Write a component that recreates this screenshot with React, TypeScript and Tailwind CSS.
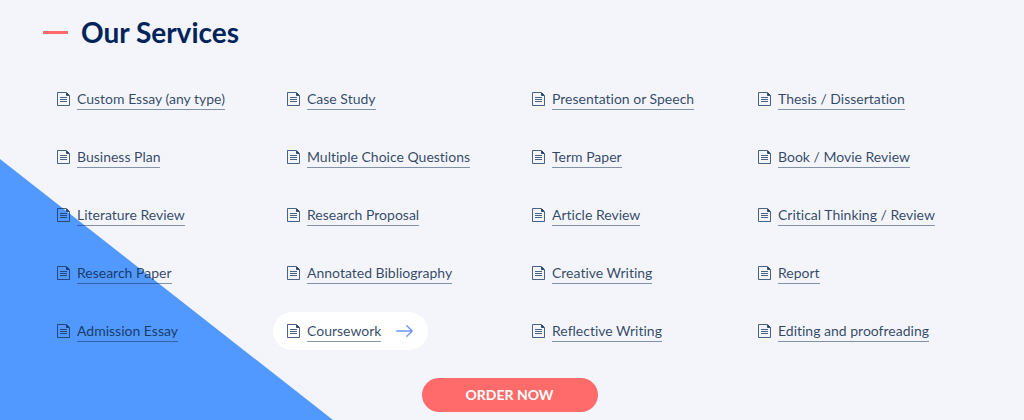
const columns = [
  ["Custom Essay (any type)", "Business Plan", "Literature Review", "Research Paper", "Admission Essay"],
  ["Case Study", "Multiple Choice Questions", "Research Proposal", "Annotated Bibliography", "Coursework"],
  ["Presentation or Speech", "Term Paper", "Article Review", "Creative Writing", "Reflective Writing"],
  ["Thesis / Dissertation", "Book / Movie Review", "Critical Thinking / Review", "Report", "Editing and proofreading"],
];

const DocumentIcon = () => (
  <svg className="h-3.5 w-[13px] shrink-0" viewBox="0 0 13 14" fill="none" stroke="currentColor" aria-hidden="true">
    <path d="M9.5 .5H.5v13h12V3.5z" strokeOpacity=".75" />
    <path d="M9.5 1v2.5H12z" fill="currentColor" strokeWidth=".7" />
    <path d="M3 5.5h7M3 7.5h7M3 9.5h7" strokeOpacity=".75" />
  </svg>
);

const ArrowIcon = ({ className }: { className: string }) => (
  <svg className={`h-3 w-[17px] shrink-0 ${className}`} viewBox="0 0 17 12" fill="none" stroke="#6b97fa" strokeWidth="1.4" strokeLinecap="round" strokeLinejoin="round" aria-hidden="true">
    <path d="M.8 6h15.4M10.8 .8 16.2 6l-5.4 5.2" />
  </svg>
);

const ServiceItem = ({ label, active }: { label: string; active: boolean }) => (
  <li className={`flex h-[38px] w-fit items-center rounded-full pr-[15px] pl-3.5 ${active ? "bg-white" : ""}`}>
    <a href="#" className="group flex items-center text-[#12305c]">
      <DocumentIcon />
      <span className="ml-[7px] border-b border-[#12305c]/50 text-sm leading-5 whitespace-nowrap text-[#0c2a4d]/85">
        {label}
      </span>
      <ArrowIcon className={active ? "ml-[15px]" : "ml-[15px] opacity-0 group-hover:opacity-100"} />
    </a>
  </li>
);

export default function App() {
  return (
    <section className="relative isolate min-h-screen overflow-hidden bg-[#f4f5fb] pt-3 pr-12 pb-2 pl-[43px] font-['Lato',sans-serif] [font-variant-ligatures:none]">
      {/* Decorative corner */}
      <svg className="absolute bottom-0 left-0 -z-10 h-[261px] w-[333px]" viewBox="0 0 333 261" aria-hidden="true">
        <path d="M0 0 333 261H0z" fill="#5199ff" />
      </svg>

      <div className="flex items-center">
        <span className="h-[3px] w-[25px] bg-[#ff6b6b]" />
        <h2 className="ml-[13px] text-[28px] leading-10 font-bold text-[#00245a]">Our Services</h2>
      </div>

      {/* Services */}
      <div className="mt-7 grid grid-cols-[230fr_245fr_226fr_232fr]">
        {columns.map((items) => (
          <ul key={items[0]} className="flex min-w-0 flex-col gap-5">
            {items.map((label) => (
              <ServiceItem key={label} label={label} active={label === "Coursework"} />
            ))}
          </ul>
        ))}
      </div>

      <div className="mt-7 flex justify-center">
        <button type="button" className="h-[34px] w-44 rounded-full bg-[#ff6b6b] text-sm font-bold text-white">
          ORDER NOW
        </button>
      </div>
    </section>
  );
}
